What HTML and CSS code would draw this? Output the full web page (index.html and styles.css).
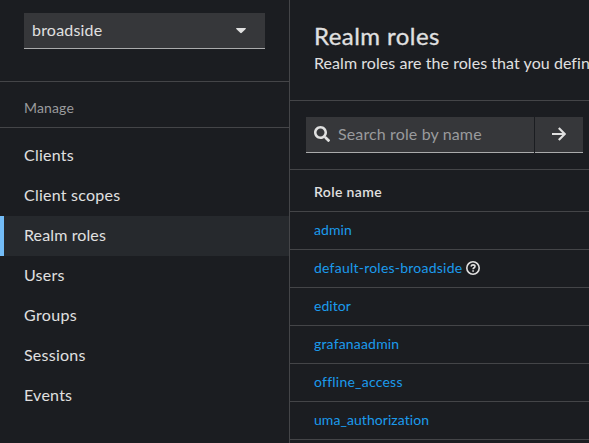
FILE: index.html
```html
<!DOCTYPE html>
<html lang="en">
<head>
<meta charset="utf-8">
<title>Realm roles</title>
<link rel="stylesheet" href="styles.css">
</head>
<body>
<div class="page">
  <aside class="sidebar">
    <div class="realm">
      <button class="realm-select" type="button">
        <span>broadside</span>
        <svg class="caret" viewBox="0 0 10 6"><path d="M.7 0h8.6q1 .2.4 1L5.8 4.8q-.8.7-1.6 0L.3 1Q-.3.2.7 0z"/></svg>
      </button>
    </div>
    <h2 class="nav-title">Manage</h2>
    <nav class="nav">
      <a class="nav-link">Clients</a>
      <a class="nav-link">Client scopes</a>
      <a class="nav-link current">Realm roles</a>
      <a class="nav-link">Users</a>
      <a class="nav-link wide">Groups</a>
      <a class="nav-link">Sessions</a>
      <a class="nav-link">Events</a>
    </nav>
  </aside>
  <main class="main">
    <header class="head">
      <h1>Realm roles</h1>
      <p>Realm roles are the roles that you define</p>
    </header>
    <div class="toolbar">
      <div class="search">
        <svg class="icon" viewBox="0 0 512 512"><path d="M505 442.7L405.3 343c-4.5-4.500-10.600-7-17-7H372c27.600-35.300 44-79.700 44-128C416 93.100 322.900 0 208 0S0 93.100 0 208s93.100 208 208 208c48.300 0 92.700-16.400 128-44v16.300c0 6.400 2.500 12.500 7 17l99.700 99.700c9.400 9.400 24.600 9.400 33.900 0l28.300-28.300c9.400-9.400 9.400-24.600.1-34zM208 336c-70.700 0-128-57.200-128-128 0-70.700 57.200-128 128-128 70.700 0 128 57.200 128 128 0 70.700-57.200 128-128 128z"/></svg>
        <span>Search role by name</span>
      </div>
      <button class="go" type="button" aria-label="Search">
        <svg class="arrow" viewBox="0 0 14 14"><path d="M0 7h12.500M6.800 1l6 6-6 6"/></svg>
      </button>
    </div>
    <div class="table">
      <div class="row th">Role name</div>
      <div class="row"><a>admin</a></div>
      <div class="row"><a class="loose">default-roles-broadside</a><svg class="help" viewBox="0 0 14 14"><circle cx="7" cy="7" r="6.200"/><path d="M5 5.500C5.300 4.400 6 3.900 7 3.900c1.200 0 2 .7 2 1.600C9 6.800 7.100 6.700 7.100 8.200M7.100 9.200v1.500"/></svg></div>
      <div class="row"><a>editor</a></div>
      <div class="row"><a class="mid">grafanaadmin</a></div>
      <div class="row"><a class="loose">offline_access</a></div>
      <div class="row"><a>uma_authorization</a></div>
    </div>
  </main>
</div>
</body>
</html>
```
FILE: styles.css
```css
* { box-sizing: border-box; }
body {
  margin: 0;
  overflow: hidden;
  background: #1b1d21;
  color: #e0e0e0;
  font: 16px/24px Lato, "Liberation Sans", sans-serif;
}
h1, h2, p { margin: 0; font-weight: 400; }
button { font: inherit; color: inherit; border: 0; }
.page { display: flex; height: 443px; }
.sidebar { flex: 0 0 290px; border-right: 1px solid #444548; }
.realm { height: 82px; padding: 13px 24px; border-bottom: 1px solid #444548; }
.realm-select {
  display: flex;
  align-items: center;
  justify-content: space-between;
  width: 241px;
  height: 36px;
  padding: 0 19px 1px 8px;
  background: #36373a;
  border-bottom: 1px solid #aaabac;
  letter-spacing: .2px;
}
.caret { width: 10px; height: 6px; margin-top: 1px; fill: #e0e0e0; }
.nav-title {
  height: 46px;
  padding: 15px 24px 0;
  border-bottom: 1px solid #444548;
  color: #9a9b9d;
  font-size: 14px;
  line-height: 21px;
  letter-spacing: .15px;
}
.nav { padding-top: 8px; }
.nav-link {
  display: block;
  height: 40px;
  padding: 7px 24px;
  letter-spacing: .24px;
}
.nav-link.wide { letter-spacing: .35px; }
.nav-link.current {
  padding-left: 20px;
  border-left: 4px solid #73bcf7;
  background: #26292d;
  letter-spacing: .12px;
}
.main { flex: 1; min-width: 0; overflow: hidden; }
.head { height: 101px; padding: 20px 0 0 24px; border-bottom: 1px solid #444548; white-space: nowrap; }
.head h1 { font-size: 24px; line-height: 31px; letter-spacing: .45px; -webkit-text-stroke: .3px #e0e0e0; }
.head p { letter-spacing: .06px; }
.toolbar { display: flex; gap: 1px; height: 69px; padding: 16px 6px 16px 16px; border-bottom: 1px solid #444548; }
.search, .go { height: 36px; background: #36373a; border-bottom: 1px solid #aaabac; display: flex; align-items: center; }
.search { width: 228px; gap: 8px; padding: 0 8px 1px; color: #9a9b9d; letter-spacing: .13px; }
.icon { width: 16px; height: 16px; fill: #e0e0e0; }
.go { width: 48px; padding: 0 1px 1px 0; justify-content: center; }
.arrow { width: 14px; height: 14px; fill: none; stroke: #e0e0e0; stroke-width: 2.2; }
.row {
  display: flex;
  align-items: center;
  gap: 4px;
  height: 38px;
  padding: 0 0 2px 24px;
  border-bottom: 1px solid #444548;
  font-size: 14px;
  line-height: 21px;
  letter-spacing: .06px;
}
.row.th { height: 42px; padding-top: 3px; font-weight: 600; letter-spacing: .36px; }
.row a { color: #1b9bec; }
.row .mid { letter-spacing: .18px; }
.row .loose { letter-spacing: .23px; }
.help { width: 14px; height: 14px; fill: none; stroke: #e0e0e0; stroke-width: 1.6; }
```
